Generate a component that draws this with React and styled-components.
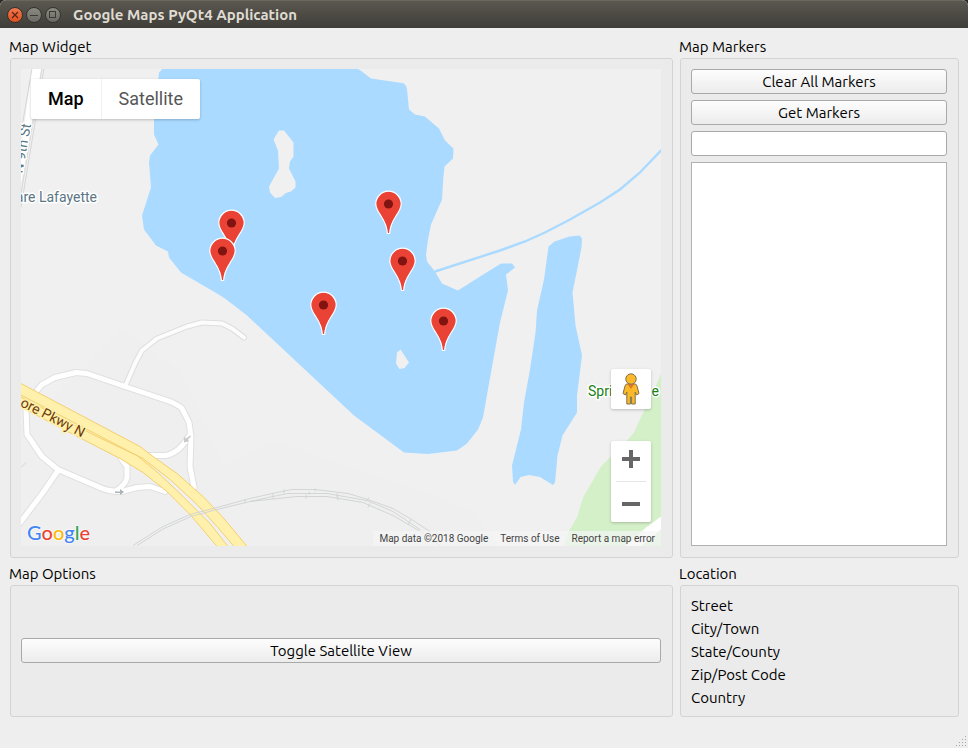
import React, { useState } from "react";
import styled, { createGlobalStyle, css } from "styled-components";

const Global = createGlobalStyle`
  *, *::before, *::after { box-sizing: border-box; }
  body { margin: 0; background: #2b2a27; }
  button, input { font: inherit; color: inherit; }
`;

const uiFont = `"Ubuntu", "Noto Sans", "Open Sans", sans-serif`;
const mapFont = `Roboto, "Liberation Sans", sans-serif`;

const Window = styled.div`
  min-height: 100vh;
  display: flex;
  flex-direction: column;
  background: #eeeeee;
  border-radius: 6px 6px 0 0;
  overflow: hidden;
  color: #000;
  font: 15px/22px ${uiFont};
`;

const TitleBar = styled.header`
  height: 28px;
  flex: none;
  display: flex;
  align-items: center;
  gap: 3px;
  padding: 0 7px;
  background: linear-gradient(#5b5850, #3e3d38);
  border-top: 1px solid #6a675e;
`;

const WindowButton = styled.button`
  width: 16px;
  height: 16px;
  padding: 0;
  border: 1px solid #34332f;
  border-radius: 50%;
  display: grid;
  place-items: center;
  color: #3b3a36;
  background: ${(p) =>
    p.$close ? "linear-gradient(#f4784f, #e0501f)" : "linear-gradient(#8b8982, #6c6a64)"};
`;

const WindowTitle = styled.h1`
  margin: 0 0 0 9px;
  font-size: 15px;
  line-height: 22px;
  font-weight: 700;
  color: #dfdbd2;
`;

const Content = styled.main`
  flex: 1;
  display: grid;
  grid-template-columns: minmax(0, 665fr) minmax(0, 281fr);
  grid-template-rows: 1fr auto;
  gap: 5px;
  padding: 8px 9px 0 8px;
`;

const Group = styled.section`
  display: flex;
  flex-direction: column;
  min-width: 0;
`;

const GroupTitle = styled.h2`
  margin: 0;
  padding-left: 1px;
  font-size: 15px;
  line-height: 22px;
  font-weight: 400;
`;

const Panel = styled.div`
  flex: 1;
  display: flex;
  flex-direction: column;
  justify-content: ${(p) => (p.$center ? "center" : "flex-start")};
  gap: 6px;
  margin-left: 2px;
  padding: 10px 11px 11px 10px;
  border: 1px solid #d3d3d3;
  border-radius: 3px;
  background: #ebebeb;
`;

const PushButton = styled.button`
  height: 25px;
  padding: 0 12px;
  line-height: 22px;
  border: 1px solid #a9a9a9;
  border-radius: 3px;
  background: linear-gradient(#fdfdfd, #ececec);
`;

const MarkerInput = styled.input`
  width: 100%;
  height: 25px;
  padding: 0 5px;
  border: 1px solid #a9a9a9;
  border-radius: 3px;
  background: #fff;
`;

const MarkerList = styled.ul`
  flex: 1;
  margin: 0;
  padding: 2px;
  list-style: none;
  border: 1px solid #b1b1b1;
  background: #fff;
`;

const Address = styled.ul`
  flex: 1;
  margin: 0 0 0 2px;
  padding: 8px 10px 7px;
  list-style: none;
  line-height: 23px;
  border: 1px solid #d3d3d3;
  border-radius: 3px;
  background: #ebebeb;
`;

const StatusBar = styled.footer`
  height: 31px;
  flex: none;
  display: flex;
  justify-content: flex-end;
  align-items: flex-end;
`;

const MapView = styled.div`
  flex: 1;
  position: relative;
  min-height: 400px;
  overflow: hidden;
  background: #f0f0f0;
  font-family: ${mapFont};
`;

const MapCanvas = styled.svg`
  position: absolute;
  inset: 0;
  width: 100%;
  height: 100%;
  font: 14px ${mapFont};
`;

const overlayCard = css`
  position: absolute;
  background: #fff;
  border-radius: 2px;
  box-shadow: 0 1px 3px rgba(0, 0, 0, 0.22);
`;

const MapTypes = styled.div`
  ${overlayCard}
  top: 10px;
  left: 10px;
  display: flex;
`;

const MapType = styled.button`
  height: 40px;
  padding: 0 17px;
  border: 0;
  border-left: ${(p) => (p.$divided ? "1px solid #f0f0f0" : "0")};
  background: none;
  font: ${(p) => (p.$active ? 500 : 400)} 18px/40px ${mapFont};
  color: ${(p) => (p.$active ? "#000" : "#565656")};
`;

const Pegman = styled.button`
  ${overlayCard}
  right: 10px;
  bottom: 137px;
  width: 40px;
  height: 40px;
  padding: 0;
  border: 0;
  display: grid;
  place-items: center;
`;

const ZoomControls = styled.div`
  ${overlayCard}
  right: 10px;
  bottom: 24px;
  width: 40px;
  display: flex;
  flex-direction: column;
  align-items: center;
`;

const ZoomButton = styled.button`
  width: 40px;
  height: 40px;
  padding: 0;
  border: 0;
  background: none;
  display: grid;
  place-items: center;
`;

const ZoomDivider = styled.div`
  width: 30px;
  height: 1px;
  background: #e6e6e6;
`;

const Legal = styled.div`
  position: absolute;
  right: 0;
  bottom: 0;
  display: flex;
  gap: 12px;
  padding: 0 6px;
  background: rgba(245, 245, 245, 0.7);
  font-size: 10px;
  line-height: 15px;
  color: #444;
`;

const LegalLink = styled.a`
  color: inherit;
  text-decoration: none;
`;

const Brand = styled.a`
  position: absolute;
  left: 6px;
  bottom: 0;
  font: 500 20px/28px Lato, ${mapFont};
  text-decoration: none;
  text-shadow: 0 0 2px #fff, 0 0 2px #fff;
`;

const Letter = styled.span`
  color: ${(p) => p.$tone};
`;

const pins = [
  [231, 223],
  [222, 251],
  [388, 204],
  [402, 261],
  [323, 305],
  [443, 321],
];

const brandLetters = [
  ["G", "#4285f4"],
  ["o", "#ea4335"],
  ["o", "#fbbc05"],
  ["g", "#4285f4"],
  ["l", "#34a853"],
  ["e", "#ea4335"],
];

const addressParts = ["Street", "City/Town", "State/County", "Zip/Post Code", "Country"];

const ramps = [
  "M37 391L42 385L55 378L76 373L87 374L125 387L170 402Q179 406 182 409L189 423L191 437L190 467L194 488",
  "M26 410L27 435L42 457L58 470L100 488Q108 492 122 492L137 488L150 487L165 492",
  "M121 459L127 467V478Q126 485 115 492",
  "M148 456H166Q180 453 190 435",
  "M58 471L43 493L18 526",
];

const branch = "M125 387L136 362L142 351L157 339L187 327L202 323L222 324L232 329L244 338";

const rails = [
  "M133 546L163 527L190 515L217 508L250 499L272 494L292 490H315L348 494L365 499L393 509L410 519L430 532",
  "M137 546L164 529L191 517L217 510L250 502L273 497L288 494H327L367 501L393 512L420 530",
  "M250 502L297 497H327L363 503L393 516L422 533L440 546",
];

function Pin({ x, y }) {
  return (
    <g transform={`translate(${x + 0.5} ${y + 0.5})`}>
      <path
        d="M0 -12.800C-7 -12.800 -12.700 -7 -12.700 0C-12.700 4.500 -10.500 7.500 -7.500 12C-3.500 18 -1.600 22 -1.100 29.500H1.100C1.600 22 3.500 18 7.500 12C10.500 7.500 12.700 4.500 12.700 0C12.700 -7 7 -12.800 0 -12.800Z"
        fill="#ea4335"
        stroke="#fff"
        strokeWidth="1.200"
      />
      <circle r="4.600" fill="#811411" />
    </g>
  );
}

function Terrain() {
  return (
    <MapCanvas viewBox="21 69 640 478" preserveAspectRatio="xMidYMid slice" role="img" aria-label="Street map">
      <rect x="21" y="69" width="640" height="478" fill="#f0f0f0" />
      <path d="M21 430L122 330L180 372L225 467L275 442L392 482L470 510L500 547H21Z" fill="#eeeeee" opacity=".4" />

      <path d="M661 374L653 393L644 411L634 433L628 440L608 460L601 467L583 498L577 518L568 533L564 547H661Z" fill="#d4f0c8" />
      <path d="M661 517L646 528L625 547H641L661 530Z" fill="#fff" />

      <g fill="#aadaff">
        <path
          fillRule="evenodd"
          d="M163 69L159 73L154 119V135L158.500 145L150 156L149 163L151 188L142 216L144 230L156 246L168 252L169 258L181 273L217 294L225 299L247 316L354 416L404 453L428 454.500L457 451L467 444L478 430L483 418L491 373L500 323L508 291L506 275L515 268L512 264H501L480 277L458 291L442 284L435 272L427 262L426 255L428 240L431 225L442 200L443.500 176L444.500 167L453 159L453.500 149L445 141L439 129L425 117L415 115L409 110L407 90Q406 84 402 83.500L371 79L360 70.500L356 69ZM279 131H284L293.500 143V157L290 162L289 169L295.500 182V188L291 192L286 193.500L281 197.500L275 198.500L270 193L269 187L279 169L278 151L273.500 140ZM400.500 350L409 363L404.500 368.500L399.500 369.500L396 364L397 353Z"
        />
        <path d="M548.500 247L554.500 242L569.500 237L579.500 236L582 239L581.500 248L572.500 293L575.500 326L582 356L577 396V413L562.500 436L557.500 456L555 483L553 485.500L540 477.500L529 475.500L520.500 477.500L515 485.500L513 482L512 466L521 430L524 403L530 370L535.500 333L537 311L544 280Z" />
      </g>
      <path d="M435 272L500 251L525 242L545 233L570 220L600 203L620 190L640 173L662 150" fill="none" stroke="#aadaff" strokeWidth="2.400" />

      <path d="M32 69H41L21 184V150Z" fill="#fff" />
      <g fill="none" stroke="#d6d6d6">
        <path d="M32 69L21 133M42 69L21 194M44 69L21 208" />
      </g>

      <g fill="none" strokeLinejoin="round" strokeLinecap="round">
        <path d={branch} stroke="#dedede" strokeWidth="6" />
        {ramps.map((d) => (
          <path key={d} d={d} stroke="#e0e0e0" strokeWidth="7" />
        ))}
        <path d={branch} stroke="#fcfcfc" strokeWidth="4" />
        {ramps.map((d) => (
          <path key={d} d={d} stroke="#fff" strokeWidth="5" />
        ))}
        <path d="M21 468L26 463" stroke="#d6d6d6" />
      </g>

      <path
        d="M20 383.500L140 447L153 457L177 474L203 497L223 518L248 548H218L190 515L167 492L143 473L120 459L85 441L20 407Z"
        fill="#fff0ab"
        stroke="#f3cf72"
      />
      <path d="M150 465L170 480L197 505L217 527L234 547H228L210 524L183 497L160 475Z" fill="#f0f0f0" />
      <g fill="none" stroke="#f3cf72">
        <path d="M20 395L93 433L137 456L160 475L183 497L210 524L228 547" />
        <path d="M20 397L93 435L143 459L170 480L197 505L217 527L234 547" />
      </g>
      <g fill="none" stroke="#cfd1d2" strokeWidth=".9">
        {rails.map((d) => (
          <path key={d} d={d} />
        ))}
        <path d="M245 500v4M273 494v5M284 490v4M309 492v3M306 495v4M315 489v3M337 494v4M338 497v4M369 498l-3 4M370 504l-2 4M411 520l-3 5" />
      </g>

      <g fill="#aab3b5">
        <path d="M115 492H120V489.500L124 492.500L120 495.500V493.500H115Z" />
        <path d="M190 436L186 439L184 437L184 443L189 442L188 440L191 437Z" fill="#c9cccd" />
      </g>

      <g stroke="#fff" strokeWidth="3" strokeLinejoin="round" paintOrder="stroke">
        <text x="97" y="202" textAnchor="end" fill="#5a7684">are Lafayette</text>
        <text transform="translate(31 125) rotate(-80)" textAnchor="end" fill="#5a7684">N 9th St</text>
        <text x="588" y="396" fill="#188018">Spri</text>
        <text x="659" y="396" textAnchor="end" fill="#188018">e</text>
      </g>
      <text
        transform="translate(82 438) rotate(27)"
        textAnchor="end"
        fill="#6f3b0c"
        stroke="#fff0ab"
        strokeWidth="3"
        paintOrder="stroke"
      >
        ore Pkwy N
      </text>

      {pins.map(([x, y]) => (
        <Pin key={`${x}-${y}`} x={x} y={y} />
      ))}
    </MapCanvas>
  );
}

function PegmanIcon() {
  return (
    <svg width="18" height="32" viewBox="0 0 18 32" aria-hidden="true">
      <path
        d="M5 11H13Q14.500 11 15 13L17 20.500L14.500 22L13.200 19V31H9.600V24H8.400V31H4.800V19L3.500 22L1 20.500L3 13Q3.500 11 5 11Z"
        fill="#fbb929"
        stroke="#80714f"
      />
      <path d="M5.500 11H12.500L9 16Z" fill="#e0752d" />
      <circle cx="9" cy="6" r="5.200" fill="#fbb929" stroke="#80714f" />
    </svg>
  );
}

function ResizeGrip() {
  const dots = [];
  for (let row = 0; row < 4; row += 1) {
    for (let col = 3 - row; col < 4; col += 1) dots.push([1 + col * 3, 1 + row * 3]);
  }
  return (
    <svg width="13" height="13" aria-hidden="true">
      {dots.map(([x, y]) => (
        <rect key={`${x}-${y}`} x={x} y={y} width="1" height="1" fill="#a8a8a8" />
      ))}
    </svg>
  );
}

export default function App() {
  const [mapType, setMapType] = useState("Map");
  const toggle = () => setMapType(mapType === "Map" ? "Satellite" : "Map");

  return (
    <>
      <Global />
      <Window>
        <TitleBar>
          <WindowButton $close aria-label="Close">
            <svg width="8" height="8" stroke="#5b2413" strokeWidth="1.300"><path d="M1 1L7 7M7 1L1 7" /></svg>
          </WindowButton>
          <WindowButton aria-label="Minimize">
            <svg width="8" height="8" stroke="currentColor"><path d="M0 4.500H8" /></svg>
          </WindowButton>
          <WindowButton aria-label="Maximize">
            <svg width="8" height="8" fill="none" stroke="currentColor"><rect x="0.500" y="0.500" width="6" height="6" /></svg>
          </WindowButton>
          <WindowTitle>Google Maps PyQt4 Application</WindowTitle>
        </TitleBar>

        <Content>
          <Group>
            <GroupTitle>Map Widget</GroupTitle>
            <Panel>
              <MapView>
                <Terrain />
                <MapTypes>
                  <MapType $active={mapType === "Map"} onClick={() => setMapType("Map")}>Map</MapType>
                  <MapType $divided $active={mapType === "Satellite"} onClick={() => setMapType("Satellite")}>
                    Satellite
                  </MapType>
                </MapTypes>
                <Pegman aria-label="Street View"><PegmanIcon /></Pegman>
                <ZoomControls>
                  <ZoomButton aria-label="Zoom in">
                    <svg width="18" height="22" fill="#666"><path d="M7 0H11V7H18V11H11V18H7V11H0V7H7Z" /></svg>
                  </ZoomButton>
                  <ZoomDivider />
                  <ZoomButton aria-label="Zoom out">
                    <svg width="18" height="18" fill="#666"><path d="M0 9H18V13H0Z" /></svg>
                  </ZoomButton>
                </ZoomControls>
                <Brand href="#google" aria-label="Google">
                  {brandLetters.map(([letter, tone], i) => (
                    <Letter key={i} $tone={tone}>{letter}</Letter>
                  ))}
                </Brand>
                <Legal>
                  <span>Map data ©2018 Google</span>
                  <LegalLink href="#terms">Terms of Use</LegalLink>
                  <LegalLink href="#report">Report a map error</LegalLink>
                </Legal>
              </MapView>
            </Panel>
          </Group>

          <Group>
            <GroupTitle>Map Markers</GroupTitle>
            <Panel>
              <PushButton>Clear All Markers</PushButton>
              <PushButton>Get Markers</PushButton>
              <MarkerInput type="text" aria-label="Marker" />
              <MarkerList aria-label="Markers" />
            </Panel>
          </Group>

          <Group>
            <GroupTitle>Map Options</GroupTitle>
            <Panel $center>
              <PushButton onClick={toggle}>Toggle Satellite View</PushButton>
            </Panel>
          </Group>

          <Group>
            <GroupTitle>Location</GroupTitle>
            <Address>
              {addressParts.map((part) => (
                <li key={part}>{part}</li>
              ))}
            </Address>
          </Group>
        </Content>

        <StatusBar><ResizeGrip /></StatusBar>
      </Window>
    </>
  );
}
